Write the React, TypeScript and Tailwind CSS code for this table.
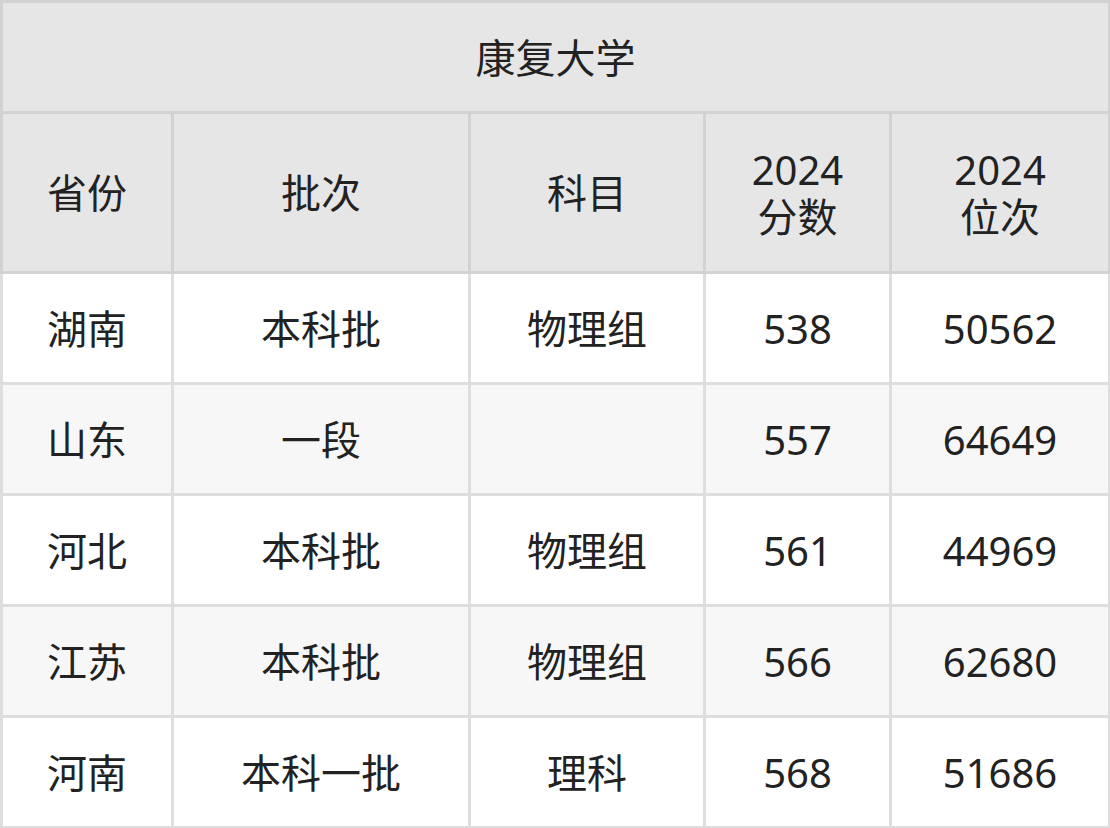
const headers = [
  { key: "province", lines: ["省份"] },
  { key: "batch", lines: ["批次"] },
  { key: "subject", lines: ["科目"] },
  { key: "score", lines: ["2024", "分数"] },
  { key: "rank", lines: ["2024", "位次"] },
];

const rows = [
  { province: "湖南", batch: "本科批", subject: "物理组", score: "538", rank: "50562" },
  { province: "山东", batch: "一段", subject: "", score: "557", rank: "64649" },
  { province: "河北", batch: "本科批", subject: "物理组", score: "561", rank: "44969" },
  { province: "江苏", batch: "本科批", subject: "物理组", score: "566", rank: "62680" },
  { province: "河南", batch: "本科一批", subject: "理科", score: "568", rank: "51686" },
];

const colWidths = ["w-[171px]", "w-[297px]", "w-[235px]", "w-[186px]", "w-[219px]"];

export default function App() {
  return (
    <div
      className="h-[828px] w-[1110px] overflow-hidden bg-white text-[#222]"
      style={{ fontFamily: '"Noto Sans", "Noto Sans CJK SC", sans-serif' }}
    >
      <table className="w-[1110px] table-fixed border-collapse text-[40px] leading-[47px]">
        <colgroup>
          {colWidths.map((w) => (
            <col key={w} className={w} />
          ))}
        </colgroup>
        <thead>
          <tr className="h-[111px] bg-[#e6e6e6]">
            <th colSpan={5} className="border-[3px] border-[#d2d2d2] text-center font-normal">
              康复大学
            </th>
          </tr>
          <tr className="h-[160px] bg-[#e6e6e6]">
            {headers.map((h, i) => (
              <th
                key={h.key}
                className={`border-[3px] border-[#d2d2d2] font-normal ${i === 0 ? "text-left pl-[44px]" : "text-center"}`}
              >
                {h.lines.map((line) => (
                  <div key={line}>{line}</div>
                ))}
              </th>
            ))}
          </tr>
        </thead>
        <tbody>
          {rows.map((row, idx) => (
            <tr key={row.province} className={`h-[111px] ${idx % 2 === 1 ? "bg-[#f7f7f7]" : "bg-white"}`}>
              <td className="border-[3px] border-[#dedede] pl-[44px] text-left">{row.province}</td>
              <td className="border-[3px] border-[#dedede] text-center">{row.batch}</td>
              <td className="border-[3px] border-[#dedede] text-center">{row.subject}</td>
              <td className="border-[3px] border-[#dedede] text-center">{row.score}</td>
              <td className="border-[3px] border-[#dedede] text-center">{row.rank}</td>
            </tr>
          ))}
        </tbody>
      </table>
    </div>
  );
}
